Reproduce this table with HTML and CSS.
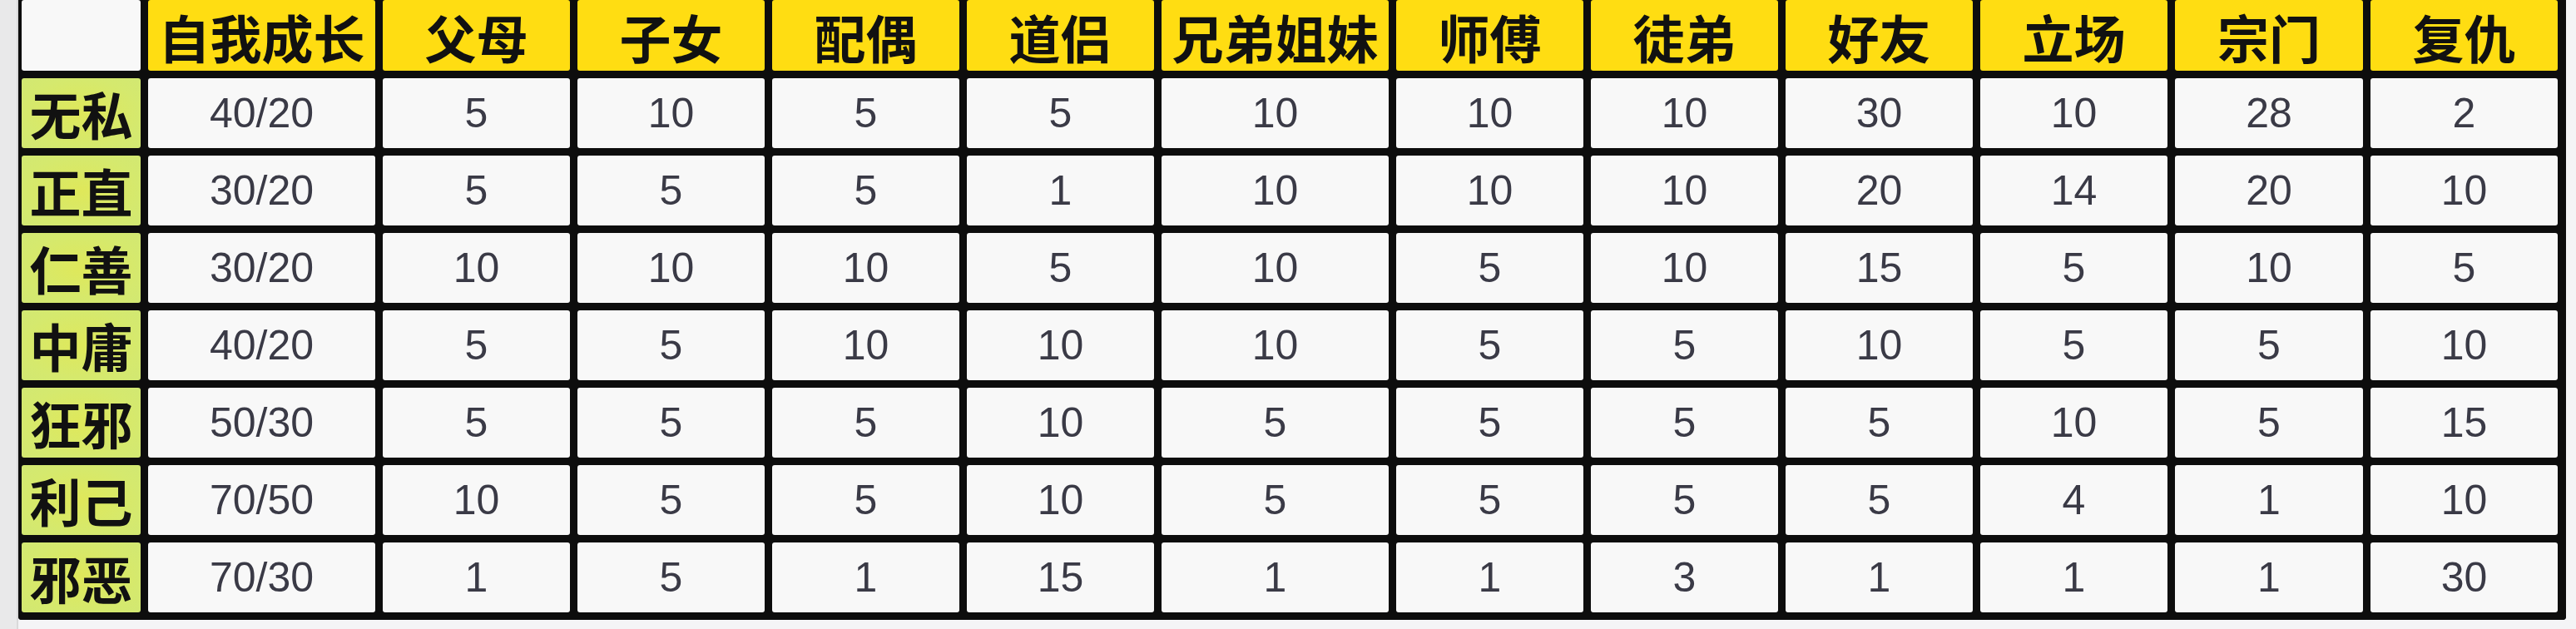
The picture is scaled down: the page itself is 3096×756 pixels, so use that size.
FILE: index.html
```html
<!DOCTYPE html>
<html lang="zh">
<head>
<meta charset="utf-8">
<title>立场表</title>
<link rel="stylesheet" href="styles.css">
</head>
<body>
<div class="sheet">
  <div class="table">
    <div class="cell corner"></div>
    <div class="cell head">自我成长</div>
    <div class="cell head">父母</div>
    <div class="cell head">子女</div>
    <div class="cell head">配偶</div>
    <div class="cell head">道侣</div>
    <div class="cell head">兄弟姐妹</div>
    <div class="cell head">师傅</div>
    <div class="cell head">徒弟</div>
    <div class="cell head">好友</div>
    <div class="cell head">立场</div>
    <div class="cell head">宗门</div>
    <div class="cell head">复仇</div>

    <div class="cell label">无私</div>
    <div class="cell num">40/20</div><div class="cell num">5</div><div class="cell num">10</div><div class="cell num">5</div><div class="cell num">5</div><div class="cell num">10</div><div class="cell num">10</div><div class="cell num">10</div><div class="cell num">30</div><div class="cell num">10</div><div class="cell num">28</div><div class="cell num">2</div>

    <div class="cell label">正直</div>
    <div class="cell num">30/20</div><div class="cell num">5</div><div class="cell num">5</div><div class="cell num">5</div><div class="cell num">1</div><div class="cell num">10</div><div class="cell num">10</div><div class="cell num">10</div><div class="cell num">20</div><div class="cell num">14</div><div class="cell num">20</div><div class="cell num">10</div>

    <div class="cell label">仁善</div>
    <div class="cell num">30/20</div><div class="cell num">10</div><div class="cell num">10</div><div class="cell num">10</div><div class="cell num">5</div><div class="cell num">10</div><div class="cell num">5</div><div class="cell num">10</div><div class="cell num">15</div><div class="cell num">5</div><div class="cell num">10</div><div class="cell num">5</div>

    <div class="cell label">中庸</div>
    <div class="cell num">40/20</div><div class="cell num">5</div><div class="cell num">5</div><div class="cell num">10</div><div class="cell num">10</div><div class="cell num">10</div><div class="cell num">5</div><div class="cell num">5</div><div class="cell num">10</div><div class="cell num">5</div><div class="cell num">5</div><div class="cell num">10</div>

    <div class="cell label">狂邪</div>
    <div class="cell num">50/30</div><div class="cell num">5</div><div class="cell num">5</div><div class="cell num">5</div><div class="cell num">10</div><div class="cell num">5</div><div class="cell num">5</div><div class="cell num">5</div><div class="cell num">5</div><div class="cell num">10</div><div class="cell num">5</div><div class="cell num">15</div>

    <div class="cell label">利己</div>
    <div class="cell num">70/50</div><div class="cell num">10</div><div class="cell num">5</div><div class="cell num">5</div><div class="cell num">10</div><div class="cell num">5</div><div class="cell num">5</div><div class="cell num">5</div><div class="cell num">5</div><div class="cell num">4</div><div class="cell num">1</div><div class="cell num">10</div>

    <div class="cell label">邪恶</div>
    <div class="cell num">70/30</div><div class="cell num">1</div><div class="cell num">5</div><div class="cell num">1</div><div class="cell num">15</div><div class="cell num">1</div><div class="cell num">1</div><div class="cell num">3</div><div class="cell num">1</div><div class="cell num">1</div><div class="cell num">1</div><div class="cell num">30</div>
  </div>
</div>
</body>
</html>
```

FILE: styles.css
```css
html, body {
  margin: 0;
  padding: 0;
}

body {
  width: 3096px;
  height: 756px;
  overflow: hidden;
  background: linear-gradient(to right, #e9e9ea 0, #e9e9ea 20px, #d9d9da 20px, #d9d9da 22px, #f4f4f6 22px);
}

.sheet {
  padding-left: 22px;
}

.table {
  display: inline-grid;
  grid-template-columns: 143px 273px 225px 225px 225px 225px 273px 225px 225px 225px 225px 226px 225px;
  grid-template-rows: 85px repeat(7, 84px);
  gap: 9px;
  background: #0d0d0d;
  border-left: 4px solid #0d0d0d;
  border-right: 10px solid #0d0d0d;
  border-bottom: 9px solid #0d0d0d;
  border-radius: 0 0 4px 4px;
}

.cell {
  display: flex;
  align-items: center;
  justify-content: center;
  border-radius: 3px;
  white-space: nowrap;
}

.corner {
  background: #f8f8f8;
}

.head {
  background: #ffdd12;
  color: #111111;
  font-family: "Noto Sans CJK SC", "Noto Sans", sans-serif;
  font-weight: 700;
  font-size: 62px;
  line-height: 1;
  padding-top: 2px;
}

.label {
  background: radial-gradient(ellipse at center, #dfe85a 0%, #d5e96e 70%, #d2e872 100%);
  color: #111111;
  font-family: "Noto Sans CJK SC", "Noto Sans", sans-serif;
  font-weight: 700;
  font-size: 62px;
  line-height: 1;
}

.num {
  background: #f8f8f8;
  color: #3a3a46;
  font-family: "Liberation Sans", Arial, sans-serif;
  font-size: 50px;
  line-height: 1;
}
```
